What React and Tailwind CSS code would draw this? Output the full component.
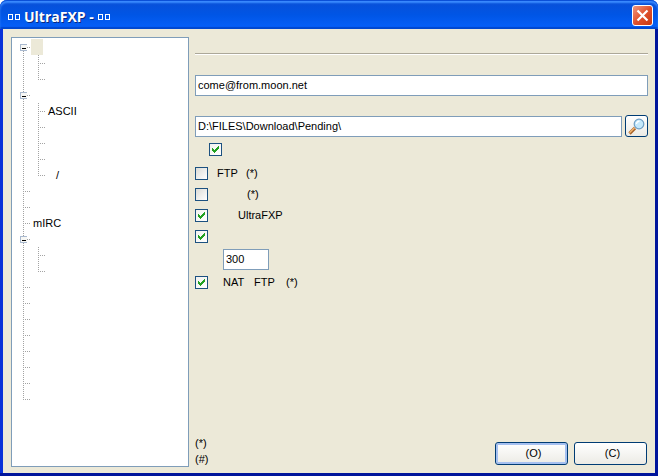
import { clsx } from "clsx"

const tree = [
    { depth: 0, first: true, box: true, selected: true },
    { depth: 1 },
    { depth: 1, last: true },
    { depth: 0, box: true },
    { depth: 1, text: "ASCII" },
    { depth: 1 },
    { depth: 1 },
    { depth: 1 },
    { depth: 1, last: true, text: "/", indent: true },
    { depth: 0 },
    { depth: 0 },
    { depth: 0, text: "mIRC" },
    { depth: 0, box: true },
    { depth: 1 },
    { depth: 1, last: true },
    { depth: 0 },
    { depth: 0 },
    { depth: 0 },
    { depth: 0 },
    { depth: 0 },
    { depth: 0 },
    { depth: 0 },
    { depth: 0, last: true },
]

// dotted connector drawn in the gutter of a tree row
function Branch({ up = true, down = true, across = true, box = false }) {
    return (
        <svg width="15" height="16" viewBox="0 0 15 16" shapeRendering="crispEdges" className="shrink-0" aria-hidden="true">
            <g stroke="#a3a3a3" strokeDasharray="1 1" fill="none">
                {up && <path d="M7.5 0V8" />}
                {down && <path d="M7.5 8V16" />}
                {across && <path d="M7 8.5H15" />}
            </g>
            {box && (
                <>
                    <rect x="4" y="5" width="7" height="7" fill="#a9b9cf" />
                    <rect x="5" y="6" width="6" height="5" fill="#f7f7f4" />
                    <path d="M6 9.5H10" stroke="#000" />
                </>
            )}
        </svg>
    )
}

function TreeRow({ row }) {
    return (
        <li className="flex h-4 items-center">
            {row.depth === 0 ? (
                <Branch up={!row.first} down={!row.last} box={row.box} />
            ) : (
                <>
                    <Branch across={false} />
                    <Branch down={!row.last} />
                </>
            )}
            <span className={clsx("h-4 px-0.5 leading-4", row.selected && "w-3 bg-[#ece9d8]", row.indent && "ml-2")}>
                {row.text}
            </span>
        </li>
    )
}

function Check({ label, checked, className, children }) {
    return (
        <label className={clsx("flex h-[21px] items-center", className)}>
            <span className="grid h-[13px] w-[13px] shrink-0">
                <input
                    type="checkbox"
                    defaultChecked={checked}
                    aria-label={label}
                    className="peer col-start-1 row-start-1 h-[13px] w-[13px] appearance-none border border-[#1c5180] bg-linear-to-br from-[#dcdcd7] to-white checked:from-[#f1f1ee]"
                />
                <svg viewBox="0 0 13 13" shapeRendering="crispEdges" className="pointer-events-none invisible col-start-1 row-start-1 h-[13px] w-[13px] peer-checked:visible" aria-hidden="true">
                    <path d="M3 5h1v1h1v1h1v-1h1v-1h1v-1h1v-1h1v3h-1v1h-1v1h-1v1h-1v1h-1v-1h-1v-1h-1z" fill="#21a121" />
                </svg>
            </span>
            {children}
        </label>
    )
}

function TitleBox() {
    return <span className="h-1.5 w-[5px] border border-white" />
}

export default function App() {
    return (
        <div className="flex min-h-screen flex-col rounded-t-lg bg-linear-to-r from-[#0831d9] from-50% to-[#00159c] to-50% font-['Liberation_Sans',sans-serif] text-[11px] text-black">
            <header className="flex h-[29px] items-center justify-between rounded-t-[7px] bg-linear-to-b from-[#0a4fd6] via-[#0055e5] to-[#0661fb] pr-[5px] pl-2 shadow-[inset_0_1px_0_#0b50d8,inset_0_3px_2px_#3b8cff,inset_0_-2px_1px_#0048cf]">
                <h1 className="flex items-center gap-0.5 pt-1 font-['Open_Sans',sans-serif] text-[14px] leading-5 font-bold text-white [text-shadow:1px_1px_#0a2a80]">
                    <TitleBox />
                    <TitleBox />
                    <span className="px-0.5">UltraFXP -</span>
                    <TitleBox />
                    <TitleBox />
                </h1>
                <button type="button" aria-label="Close" className="mt-0.5 grid h-[21px] w-[21px] place-items-center rounded-[3px] border border-white bg-linear-to-br from-[#ee967e] via-[#e0512c] to-[#c8380f]">
                    <svg width="13" height="13" viewBox="0 0 13 13" aria-hidden="true">
                        <path d="M1.5 1.5l10 10M11.5 1.5l-10 10" stroke="#fff" strokeWidth="2.2" />
                    </svg>
                </button>
            </header>

            <div className="flex flex-1 flex-col border-b-3 border-[#00159c] px-[3px]">
                <main className="flex flex-1 gap-1.5 bg-[#ece9d8] pt-2 pr-[7px] pb-1.5 pl-2">
                    <ul className="w-[178px] shrink-0 border border-[#7f9db9] bg-white py-px pl-1">
                        {tree.map((row, i) => (
                            <TreeRow key={i} row={row} />
                        ))}
                    </ul>

                    <form className="flex min-w-0 flex-1 flex-col" onSubmit={(e) => e.preventDefault()}>
                        <hr className="mt-4 h-0.5 border-t border-b border-t-[#aca899] border-b-white" />

                        <input
                            type="text"
                            aria-label="E-mail"
                            defaultValue="come@from.moon.net"
                            className="mt-5 h-[21px] w-full border border-[#7f9db9] bg-white px-0.5 pb-0.5"
                        />
                        <div className="mt-[19px] flex items-center gap-[3px]">
                            <input
                                type="text"
                                aria-label="Download folder"
                                defaultValue="D:\FILES\Download\Pending\"
                                className="h-[21px] min-w-0 flex-1 border border-[#7f9db9] bg-white px-0.5"
                            />
                            <button type="button" aria-label="Browse" className="grid h-[22px] w-[23px] place-items-center rounded-[3px] border border-[#003c74] bg-linear-to-b from-white to-[#ecebe5]">
                                <svg width="17" height="17" viewBox="0 0 17 17" aria-hidden="true">
                                    <path d="M1.5 15.5L7 10" stroke="#a8642c" strokeWidth="3.2" />
                                    <path d="M1.5 14.8L6.5 9.8" stroke="#f3b873" strokeWidth="1.4" />
                                    <circle cx="11" cy="6" r="4.8" fill="#c4e8fb" stroke="#6f9fc4" strokeWidth="1.2" />
                                    <path d="M8.5 6A2.8 2.8 0 0 1 11.5 3.2" fill="none" stroke="#fff" strokeWidth="1.4" />
                                </svg>
                            </button>
                        </div>

                        <div className="mt-0.5 flex flex-col">
                            <Check label="Use folder" checked className="ml-3.5" />
                            <Check className="mt-[3px]">
                                <span className="ml-[9px] w-[29px]">FTP</span>
                                <span>(*)</span>
                            </Check>
                            <Check>
                                <span className="ml-[39px]">(*)</span>
                            </Check>
                            <Check checked>
                                <span className="ml-[30px]">UltraFXP</span>
                            </Check>
                            <Check label="Use limit" checked />
                            <input
                                type="text"
                                aria-label="Limit"
                                defaultValue="300"
                                className="mt-0.5 ml-7 h-[21px] w-[46px] border border-[#7f9db9] bg-white px-0.5 pb-0.5"
                            />
                            <Check checked className="mt-0.5">
                                <span className="ml-[15px] w-[31px]">NAT</span>
                                <span className="w-8">FTP</span>
                                <span>(*)</span>
                            </Check>
                        </div>

                        <footer className="mt-auto flex items-end justify-between">
                            <div className="leading-4">
                                <p>(*)</p>
                                <p>(#)</p>
                            </div>
                            <div className="mr-px mb-0.5 flex gap-1.5">
                                <button type="submit" className="h-[23px] w-[73px] rounded-[3px] border border-[#003c74] bg-linear-to-b from-white to-[#ecebe5] pl-1 shadow-[inset_0_0_0_2px_#a5c0f0]">
                                    (O)
                                </button>
                                <button type="button" className="h-[23px] w-[73px] rounded-[3px] border border-[#003c74] bg-linear-to-b from-white to-[#ecebe5] pl-1">
                                    (C)
                                </button>
                            </div>
                        </footer>
                    </form>
                </main>
            </div>
        </div>
    )
}
